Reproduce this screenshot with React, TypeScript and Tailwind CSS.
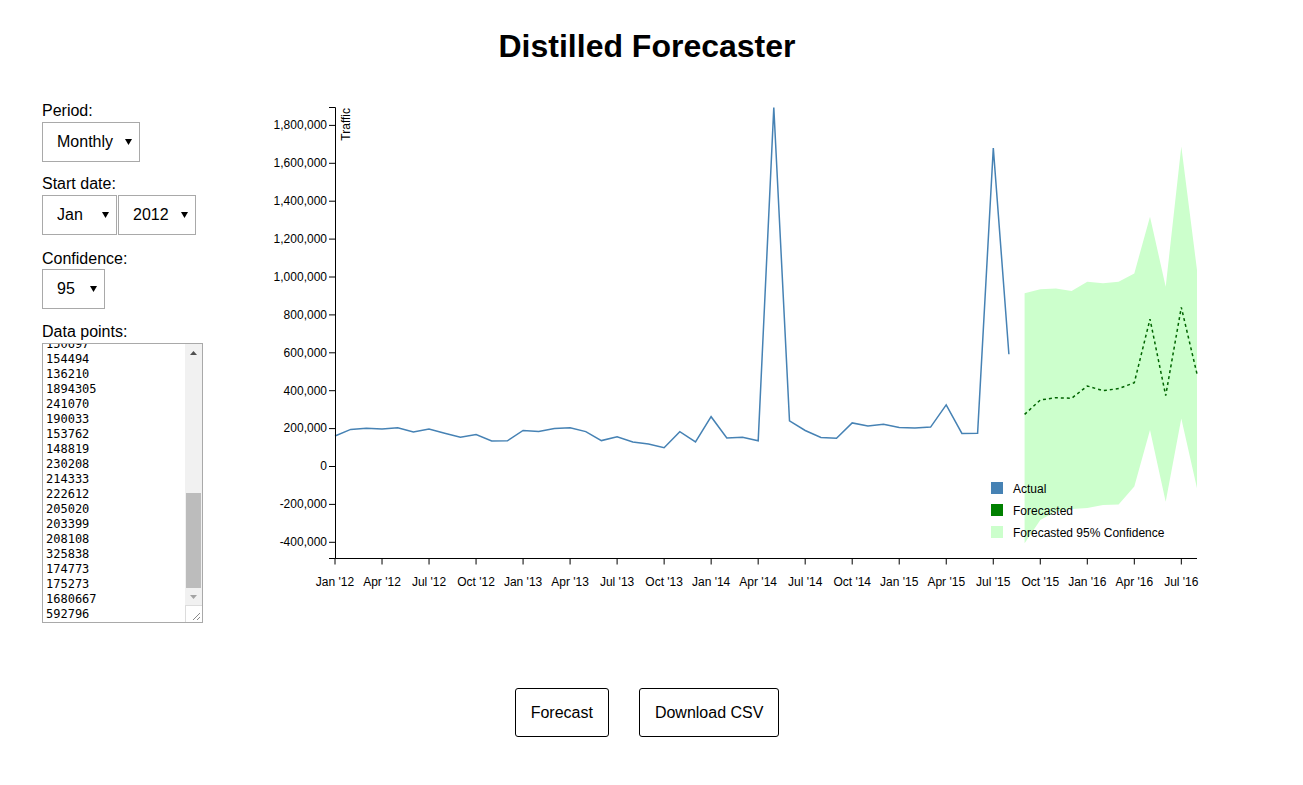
import React, { useEffect, useRef } from 'react';

const actual = [
  160843, 195612, 201377, 198045, 204890, 182114, 197530, 175268, 153907, 168342, 134981, 135820,
  190576, 185433, 199870, 204512, 184026, 136418, 156903, 129655, 118734, 99218, 183640, 129402,
  262871, 150697, 154494, 136210, 1894305, 241070, 190033, 153762, 148819, 230208, 214333, 222612,
  205020, 203399, 208108, 325838, 174773, 175273, 1680667, 592796,
];

const forecast = [275000, 351000, 363000, 360000, 425000, 400000, 411000, 442000, 778000, 374000, 840000, 488000];
const upper = [914000, 935000, 940000, 926000, 975000, 967000, 975000, 1019000, 1318000, 949000, 1688000, 1037000];
const lower = [-405000, -282000, -238000, -225000, -219000, -203000, -200000, -106000, 193000, -186000, 254000, -115000];

const X = (i: number) => 335 + (i * 862) / 55;
const Y = (v: number) => 466.5 - v * 0.0001895;

const months = ['Jan', 'Apr', 'Jul', 'Oct'];
const yTicks = [-400000, -200000, 0, 200000, 400000, 600000, 800000, 1000000, 1200000, 1400000, 1600000, 1800000];

const Arrow = () => (
  <svg className="pointer-events-none absolute right-[8px] top-1/2 -translate-y-1/2" width="7" height="6" viewBox="0 0 7 6">
    <polygon points="0,0 7,0 3.5,6" fill="#000" />
  </svg>
);

const Select = ({ value, options, width }: { value: string; options: string[]; width: string }) => (
  <div className="relative inline-block">
    <select
      defaultValue={value}
      className={`${width} h-[40px] appearance-none border border-[#a9a9a9] bg-white pl-[14px] text-[16px] text-black outline-none`}
    >
      {options.map((o) => (
        <option key={o}>{o}</option>
      ))}
    </select>
    <Arrow />
  </div>
);

// drawn scrollbar, the headless browser hides native ones
const ScrollBar = () => (
  <div className="flex w-[17px] shrink-0 flex-col bg-[#f1f1f1]">
    <div className="flex h-[17px] items-center justify-center">
      <svg width="7" height="4" viewBox="0 0 7 4">
        <polygon points="0,4 7,4 3.5,0" fill="#505050" />
      </svg>
    </div>
    <div className="flex flex-1 flex-col justify-end px-[1px]">
      <div className="h-[95px] bg-[#bcbcbc]" />
    </div>
    <div className="flex h-[17px] items-center justify-center">
      <svg width="7" height="4" viewBox="0 0 7 4">
        <polygon points="0,0 7,0 3.5,4" fill="#a3a3a3" />
      </svg>
    </div>
    <div className="flex h-[17px] items-end justify-end border-l border-t border-[#dcdcdc] bg-white p-[2px]">
      <svg width="8" height="8" viewBox="0 0 8 8">
        <path d="M1,8L8,1M5,8L8,5" stroke="#8a8a8a" strokeWidth="1" />
      </svg>
    </div>
  </div>
);

const Chart = () => {
  const linePath = actual.map((v, i) => `${i ? 'L' : 'M'}${X(i).toFixed(1)},${Y(v).toFixed(1)}`).join('');
  const fcPath = forecast.map((v, i) => `${i ? 'L' : 'M'}${X(i + 44).toFixed(1)},${Y(v).toFixed(1)}`).join('');
  const band =
    upper.map((v, i) => `${i ? 'L' : 'M'}${X(i + 44).toFixed(1)},${Y(v).toFixed(1)}`).join('') +
    lower
      .map((v, i) => [i, v] as const)
      .reverse()
      .map(([i, v]) => `L${X(i + 44).toFixed(1)},${Y(v).toFixed(1)}`)
      .join('') +
    'Z';

  return (
    <svg width="1000" height="510" className="ml-[47px] shrink-0" style={{ fontFamily: '"Liberation Sans", Arial, sans-serif' }}>
      <g transform="translate(-250,-95)">
        <path d={band} fill="#ccffcc" />
        <path d={linePath} fill="none" stroke="#4682b4" strokeWidth="1.5" />
        <path d={fcPath} fill="none" stroke="#006400" strokeWidth="1.5" strokeDasharray="3,3" />

        {/* y axis */}
        <path d="M329,107.5H335.5V558.5H329" fill="none" stroke="#000" />
        {yTicks.map((t) => (
          <g key={t}>
            <line x1="329" x2="335" y1={Y(t)} y2={Y(t)} stroke="#000" />
            <text x="327" y={Y(t)} dy=".32em" textAnchor="end" fontSize="12" fill="#000">
              {t.toLocaleString('en-US')}
            </text>
          </g>
        ))}
        <text transform="rotate(-90)" x={-108} y={341} dy=".71em" textAnchor="end" fontSize="12" fill="#000">
          Traffic
        </text>

        {/* x axis */}
        <path d="M335.5,558.5H1197" fill="none" stroke="#000" />
        {Array.from({ length: 19 }, (_, k) => k * 3).map((i) => (
          <g key={i}>
            <line x1={X(i)} x2={X(i)} y1="558" y2="564.5" stroke="#000" />
            <text x={X(i)} y="586" textAnchor="middle" fontSize="12" fill="#000">
              {`${months[(i / 3) % 4]} '${12 + Math.floor(i / 12)}`}
            </text>
          </g>
        ))}

        {/* legend */}
        <rect x="991" y="482" width="12" height="12" fill="#4682b4" />
        <text x="1013" y="493" fontSize="12" fill="#000">Actual</text>
        <rect x="991" y="504" width="12" height="12" fill="green" />
        <text x="1013" y="515" fontSize="12" fill="#000">Forecasted</text>
        <rect x="991" y="526" width="12" height="12" fill="#ccffcc" />
        <text x="1013" y="537" fontSize="12" fill="#000">Forecasted 95% Confidence</text>
      </g>
    </svg>
  );
};

export default function App() {
  const ta = useRef<HTMLTextAreaElement>(null);
  useEffect(() => {
    if (ta.current) ta.current.scrollTop = ta.current.scrollHeight;
  }, []);

  return (
    <div className="min-h-screen w-[1294px] bg-white text-black" style={{ fontFamily: '"Liberation Sans", Arial, sans-serif' }}>
      <h1 className="pt-[28px] text-center text-[32px] font-bold leading-[37px]">Distilled Forecaster</h1>

      <div className="mt-[30px] flex items-start">
        <div className="ml-[42px] flex w-[161px] shrink-0 flex-col pt-[7px] text-[16px]">
          <label className="leading-[18px]">Period:</label>
          <div className="mt-[2px]">
            <Select value="Monthly" options={['Daily', 'Weekly', 'Monthly']} width="w-[98px]" />
          </div>

          <label className="mt-[13px] leading-[18px]">Start date:</label>
          <div className="mt-[2px] flex gap-[1px]">
            <Select value="Jan" options={['Jan', 'Feb', 'Mar', 'Apr', 'May', 'Jun', 'Jul', 'Aug', 'Sep', 'Oct', 'Nov', 'Dec']} width="w-[75px]" />
            <Select value="2012" options={['2010', '2011', '2012', '2013', '2014', '2015']} width="w-[78px]" />
          </div>

          <label className="mt-[15px] leading-[18px]">Confidence:</label>
          <div className="mt-[1px]">
            <Select value="95" options={['80', '90', '95', '99']} width="w-[63px]" />
          </div>

          <label className="mt-[14px] leading-[18px]">Data points:</label>
          <div className="mt-[2px] flex h-[280px] w-[161px] border border-[#a9a9a9] bg-white">
            <textarea
              ref={ta}
              defaultValue={actual.join('\n')}
              className="block h-full min-w-0 flex-1 resize-none overflow-hidden border-0 pb-0 pl-[3px] pr-0 pt-[2px] text-[12px] leading-[15px] outline-none"
              style={{ fontFamily: '"DejaVu Sans Mono", "Liberation Mono", monospace' }}
            />
            <ScrollBar />
          </div>
        </div>

        <Chart />
      </div>

      <div className="mt-[65px] flex justify-center gap-[30px]">
        <button className="h-[49px] rounded-[3px] border border-black bg-white px-[15px] text-[16px]">Forecast</button>
        <button className="h-[49px] rounded-[3px] border border-black bg-white px-[15px] text-[16px]">Download CSV</button>
      </div>
    </div>
  );
}
